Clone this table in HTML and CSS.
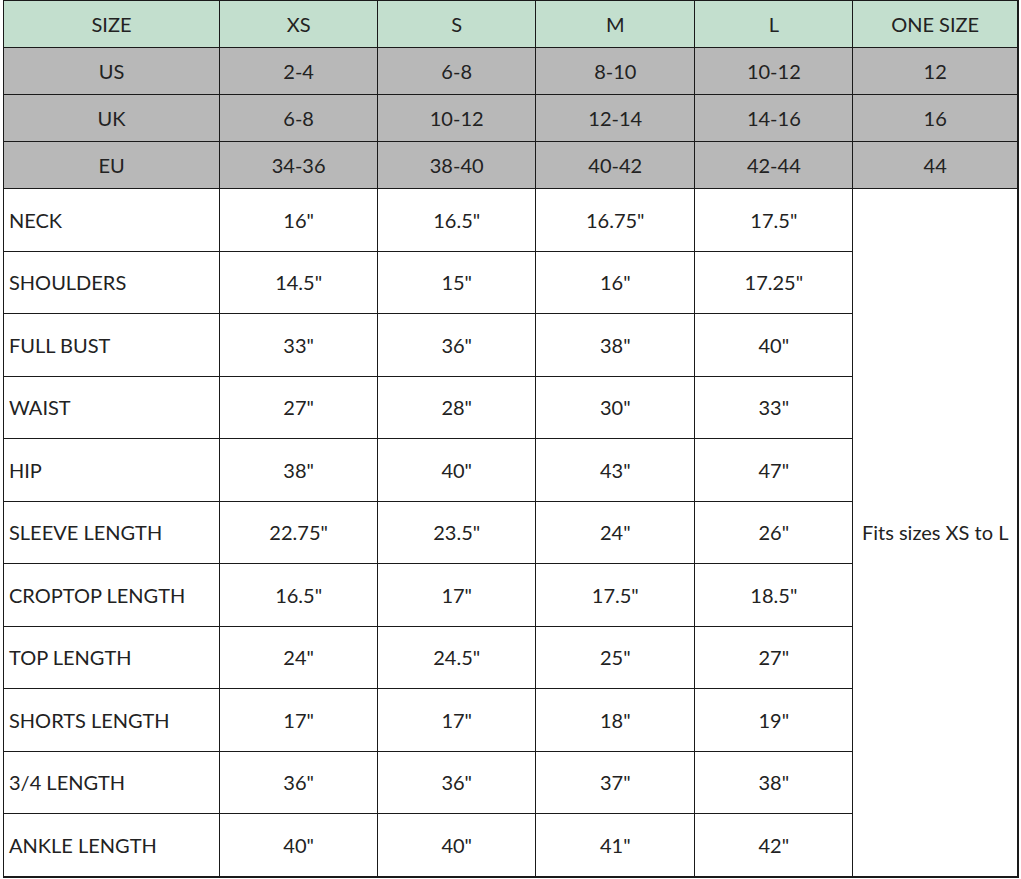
FILE: index.html
```html
<!DOCTYPE html>
<html>
<head>
<meta charset="utf-8">
<link rel="stylesheet" href="styles.css">
</head>
<body>
<table class="chart">
  <colgroup>
    <col class="c-label">
    <col class="c-size">
    <col class="c-size">
    <col class="c-size2">
    <col class="c-size">
    <col class="c-one">
  </colgroup>
  <thead>
    <tr class="head">
      <th>SIZE</th><th>XS</th><th>S</th><th>M</th><th>L</th><th>ONE SIZE</th>
    </tr>
  </thead>
  <tbody>
    <tr class="conv"><td>US</td><td>2-4</td><td>6-8</td><td>8-10</td><td>10-12</td><td>12</td></tr>
    <tr class="conv"><td>UK</td><td>6-8</td><td>10-12</td><td>12-14</td><td>14-16</td><td>16</td></tr>
    <tr class="conv"><td>EU</td><td>34-36</td><td>38-40</td><td>40-42</td><td>42-44</td><td>44</td></tr>
    <tr class="meas"><td class="label">NECK</td><td>16"</td><td>16.5"</td><td>16.75"</td><td>17.5"</td><td class="one" rowspan="11">Fits sizes XS to L</td></tr>
    <tr class="meas"><td class="label">SHOULDERS</td><td>14.5"</td><td>15"</td><td>16"</td><td>17.25"</td></tr>
    <tr class="meas"><td class="label">FULL BUST</td><td>33"</td><td>36"</td><td>38"</td><td>40"</td></tr>
    <tr class="meas"><td class="label">WAIST</td><td>27"</td><td>28"</td><td>30"</td><td>33"</td></tr>
    <tr class="meas"><td class="label">HIP</td><td>38"</td><td>40"</td><td>43"</td><td>47"</td></tr>
    <tr class="meas"><td class="label">SLEEVE LENGTH</td><td>22.75"</td><td>23.5"</td><td>24"</td><td>26"</td></tr>
    <tr class="meas"><td class="label">CROPTOP LENGTH</td><td>16.5"</td><td>17"</td><td>17.5"</td><td>18.5"</td></tr>
    <tr class="meas"><td class="label">TOP LENGTH</td><td>24"</td><td>24.5"</td><td>25"</td><td>27"</td></tr>
    <tr class="meas"><td class="label">SHORTS LENGTH</td><td>17"</td><td>17"</td><td>18"</td><td>19"</td></tr>
    <tr class="meas"><td class="label">3/4 LENGTH</td><td>36"</td><td>36"</td><td>37"</td><td>38"</td></tr>
    <tr class="meas"><td class="label">ANKLE LENGTH</td><td>40"</td><td>40"</td><td>41"</td><td>42"</td></tr>
  </tbody>
</table>
</body>
</html>
```
FILE: styles.css
```css
html, body {
  margin: 0;
  padding: 0;
  background: #ffffff;
}

body {
  font-family: "Lato", "Open Sans", sans-serif;
  color: #222222;
}

.chart {
  border-collapse: collapse;
  table-layout: fixed;
  margin-left: 3px;
  width: 1016px;
  font-size: 20px;
  border-bottom: 2px solid #1a1a1a;
  border-right: 2px solid #1a1a1a;
}

.c-label { width: 216px; }
.c-size { width: 158px; }
.c-size2 { width: 159px; }
.c-one { width: 165px; }

.chart th,
.chart td {
  border: 1px solid #1a1a1a;
  text-align: center;
  vertical-align: middle;
  padding: 0;
  font-weight: 400;
  white-space: nowrap;
}

.head th {
  background: #c3dfce;
  height: 46px;
}

.conv td {
  background: #b8b8b8;
  height: 46px;
}

.meas td {
  background: #ffffff;
  height: 61.5px;
}

.meas td.label {
  text-align: left;
  padding-left: 5px;
}

.meas td.one {
  text-align: center;
  padding: 0 2px;
}
```
